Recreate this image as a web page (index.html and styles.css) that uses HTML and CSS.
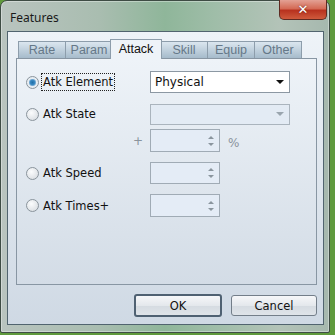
FILE: index.html
```html
<!DOCTYPE html>
<html lang="en">
  <head>
    <meta charset="UTF-8" />
    <title>Features</title>
    <link rel="stylesheet" href="styles.css">
  </head>
  <body>
    <div class="window">
      <div class="titlebar">
        <span class="title">Features</span>
        <div class="close">&#x2715;</div>
      </div>
      <div class="client">
        <div class="tabs">
          <div class="tab">Rate</div>
          <div class="tab">Param</div>
          <div class="tab active">Attack</div>
          <div class="tab">Skill</div>
          <div class="tab">Equip</div>
          <div class="tab">Other</div>
        </div>
        <div class="panel">
          <div class="row r1">
            <div class="opt"><span class="radio on"></span><span class="focus">Atk Element</span></div>
            <div class="select">Physical<span class="arrow"></span></div>
          </div>
          <div class="row r2">
            <div class="opt"><span class="radio"></span><span>Atk State</span></div>
            <div class="select disabled"><span class="arrow"></span></div>
          </div>
          <div class="row r3">
            <div class="opt plus">+</div>
            <div class="spin"><span class="up"></span><span class="down"></span></div>
            <span class="unit">%</span>
          </div>
          <div class="row r4">
            <div class="opt"><span class="radio"></span><span>Atk Speed</span></div>
            <div class="spin"><span class="up"></span><span class="down"></span></div>
          </div>
          <div class="row r5">
            <div class="opt"><span class="radio"></span><span>Atk Times+</span></div>
            <div class="spin"><span class="up"></span><span class="down"></span></div>
          </div>
        </div>
        <div class="buttons">
          <button class="btn default">OK</button>
          <button class="btn">Cancel</button>
        </div>
      </div>
    </div>
  </body>
</html>
```

FILE: styles.css
```css
body {
  margin: 0;
  width: 335px;
  height: 335px;
  overflow: hidden;
  background-color: #5f9a3c;
  font-family: "DejaVu Sans", Verdana, sans-serif;
  font-size: 11px;
  color: #111;
}

.window {
  box-sizing: border-box;
  width: 330px;
  height: 333px;
  padding: 0 5px 7px 6px;
  border: 1px solid #3e4c44;
  border-radius: 7px 7px 2px 2px;
  background: linear-gradient(90deg, #b9c4bf 0%, #a9bdb0 30%, #8fb69a 50%, #9fbda8 65%, #b3c3b8 85%, #a6b8ae 100%);
  box-shadow: inset 0 0 0 1px rgba(255, 255, 255, 0.35);
}

.titlebar {
  height: 30px;
  display: flex;
  align-items: flex-start;
  justify-content: space-between;
}

.title {
  margin: 8px 0 0 3px;
  font-family: "Noto Sans", "Open Sans", sans-serif;
  font-size: 12px;
  color: #1a1a1a;
}

.close {
  box-sizing: border-box;
  width: 48px;
  height: 20px;
  margin-top: -1px;
  margin-right: -3px;
  border: 1px solid #5e2a22;
  border-top: none;
  border-radius: 0 0 5px 5px;
  background: linear-gradient(#e3a194 0%, #d46a55 45%, #b8321f 55%, #cf5a3c 100%);
  color: #fff;
  font-size: 13px;
  font-weight: bold;
  text-align: center;
  line-height: 19px;
  text-shadow: 0 0 2px #5a1a10;
}

.client {
  box-sizing: border-box;
  height: 294px;
  padding: 7px 6px 0 8px;
  border: 1px solid #51646f;
  background: linear-gradient(#eef3f8, #cfd9e4);
}

.tabs {
  display: flex;
  align-items: flex-end;
  height: 19px;
  padding-left: 2px;
}

.tab {
  box-sizing: border-box;
  width: 48px;
  height: 17px;
  margin-right: -1px;
  border: 1px solid #8d9dab;
  border-bottom: none;
  background: linear-gradient(#dbe6ef, #a6bbcb);
  color: #657888;
  font-family: "Liberation Sans", Arial, sans-serif;
  font-size: 12.5px;
  text-align: center;
  line-height: 17px;
}

.tab.active {
  position: relative;
  z-index: 1;
  width: 52px;
  height: 20px;
  margin: 0 -2px -1px -2px;
  background: #eef3f8;
  color: #111;
  line-height: 18px;
}

.panel {
  box-sizing: border-box;
  width: 301px;
  height: 227px;
  padding-top: 12px;
  border: 1px solid #8896a3;
  background: linear-gradient(#eef3f8, #d3dce6);
}

.row {
  display: flex;
  align-items: center;
  height: 22px;
}

.r2 { margin-top: 10px; }
.r3 { margin-top: 4px; height: 23px; }
.r4 { margin-top: 10px; }
.r5 { margin-top: 10px; height: 23px; }

.opt {
  box-sizing: border-box;
  width: 133px;
  padding-left: 9px;
  display: flex;
  align-items: center;
  gap: 4px;
  font-size: 11.5px;
}

.opt.plus {
  justify-content: flex-end;
  padding-right: 7px;
  color: #8a939c;
  font-size: 12px;
}

.radio {
  box-sizing: border-box;
  width: 13px;
  height: 13px;
  border: 1px solid #8a949c;
  border-radius: 50%;
  background: radial-gradient(circle at 40% 35%, #fbfcfd, #d3d8dd);
}

.radio.on {
  background: radial-gradient(circle, #1f6fa8 0, #3d8cc4 2.5px, #9cc0dc 3.5px, #e7edf2 4px);
}

.focus {
  outline: 1px dotted #222;
  outline-offset: 1px;
}

.select {
  box-sizing: border-box;
  width: 140px;
  height: 22px;
  padding-left: 4px;
  display: flex;
  align-items: center;
  justify-content: space-between;
  border: 1px solid #8c98a3;
  background: #fff;
  font-size: 12px;
}

.select.disabled {
  height: 21px;
  border-color: #aab4bd;
  background: #e3ebf4;
  justify-content: flex-end;
}

.arrow {
  width: 0;
  height: 0;
  margin-right: 5px;
  border-left: 4px solid transparent;
  border-right: 4px solid transparent;
  border-top: 4px solid #111;
}

.disabled .arrow {
  border-top-color: #9aa5ae;
}

.spin {
  box-sizing: border-box;
  width: 70px;
  height: 100%;
  padding-right: 5px;
  display: flex;
  flex-direction: column;
  align-items: flex-end;
  justify-content: center;
  gap: 4px;
  border: 1px solid #a0abb5;
  background: #e4ecf6;
}

.spin .up,
.spin .down {
  width: 0;
  height: 0;
  border-left: 3px solid transparent;
  border-right: 3px solid transparent;
}

.spin .up {
  border-bottom: 3px solid #8a959e;
}

.spin .down {
  border-top: 3px solid #8a959e;
}

.unit {
  margin-left: 8px;
  margin-top: 4px;
  color: #8a939c;
  font-size: 12px;
}

.buttons {
  display: flex;
  justify-content: flex-end;
  align-items: center;
  gap: 9px;
  width: 301px;
  margin-top: 9px;
}

.btn {
  box-sizing: border-box;
  width: 86px;
  height: 21px;
  padding: 0;
  border: 1px solid #737e89;
  border-radius: 3px;
  background: linear-gradient(#f6f7f9, #e4e8ec 50%, #d5dbe1 51%, #dfe4e9);
  font-family: "DejaVu Sans", Verdana, sans-serif;
  font-size: 11.5px;
  color: #111;
}

.btn.default {
  width: 88px;
  height: 23px;
  border: 2px solid #4f6172;
}
```
